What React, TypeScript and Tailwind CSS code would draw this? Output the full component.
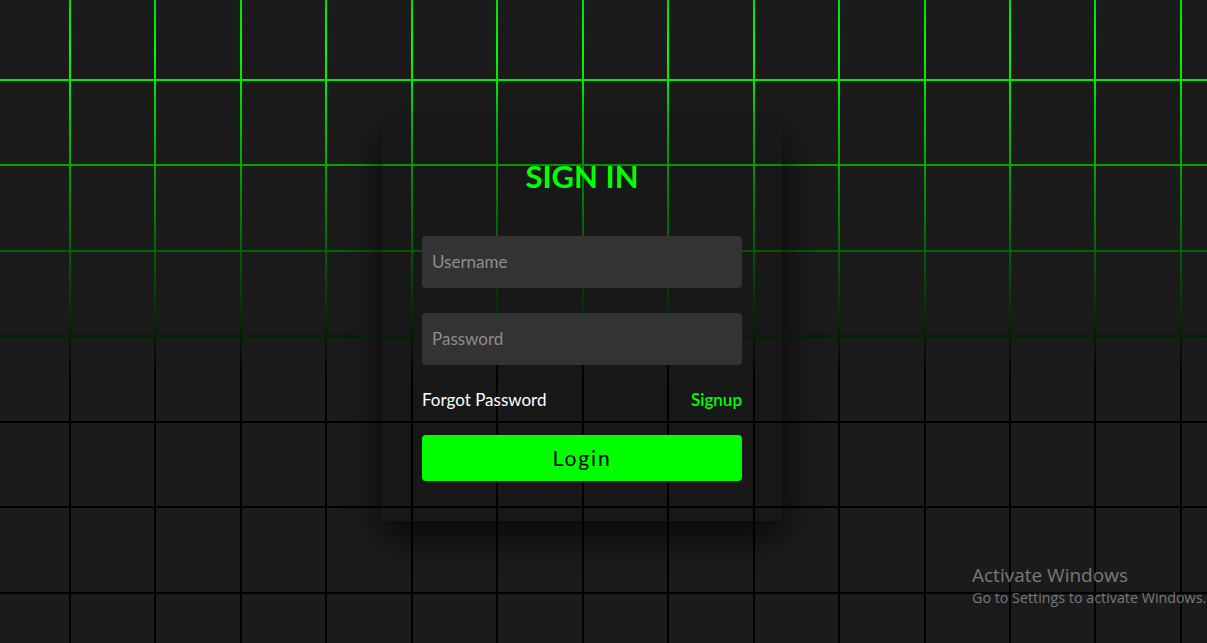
import React from "react";

const COLS = 16;
const ROWS = 9;

export default function App() {
  const cells = Array.from({ length: COLS * ROWS });
  return (
    <div className="relative h-[643px] w-full overflow-hidden bg-black font-['Lato','Noto_Sans',sans-serif]">
      {/* green sweep behind the grid */}
      <div className="absolute inset-0 bg-[linear-gradient(to_bottom,#00e000_0px,#00ff00_50px,#000000_380px)]" />
      {/* grid of tiles */}
      <div className="absolute left-[-14.46px] top-[-4.46px] grid grid-cols-[repeat(16,83.46px)] auto-rows-[83.46px] gap-[2px]">
        {cells.map((_, i) => (
          <span key={i} className="block bg-[#1b1b1b]" />
        ))}
      </div>

      {/* card */}
      <div className="relative z-10 flex h-full items-center justify-center pr-[43px] pb-[7px]">
        <div className="flex w-[400px] flex-col gap-[40px] rounded-[4px] bg-[rgba(0,0,0,0.1)] p-[40px] shadow-[0_15px_35px_rgba(0,0,0,0.7)]">
          <h2 className="text-center text-[31px] font-bold leading-[40px] text-[#00ff00]">SIGN IN</h2>
          <div className="flex flex-col gap-[25px]">
            <input
              type="text"
              placeholder="Username"
              className="h-[52px] w-full rounded-[4px] bg-[#333333] px-[10px] text-[17px] text-white outline-none placeholder:text-[#8e8e8e]"
            />
            <input
              type="password"
              placeholder="Password"
              className="h-[52px] w-full rounded-[4px] bg-[#333333] px-[10px] text-[17px] text-white outline-none placeholder:text-[#8e8e8e]"
            />
            <div className="flex h-[20px] items-center justify-between text-[17px] leading-[20px]">
              <span className="text-white">Forgot Password</span>
              <span className="font-semibold text-[#00ff00]">Signup</span>
            </div>
            <button className="h-[46px] w-full rounded-[4px] bg-[#00ff00] text-[21px] tracking-[0.09em] text-black">
              Login
            </button>
          </div>
        </div>
      </div>

      {/* windows watermark */}
      <div className="absolute left-[972px] top-[563px] z-20 whitespace-nowrap font-['Open_Sans','Noto_Sans',sans-serif] text-[rgba(255,255,255,0.42)]">
        <div className="text-[19px] leading-[25px]">Activate Windows</div>
        <div className="text-[14.3px] leading-[20px]">Go to Settings to activate Windows.</div>
      </div>
    </div>
  );
}
